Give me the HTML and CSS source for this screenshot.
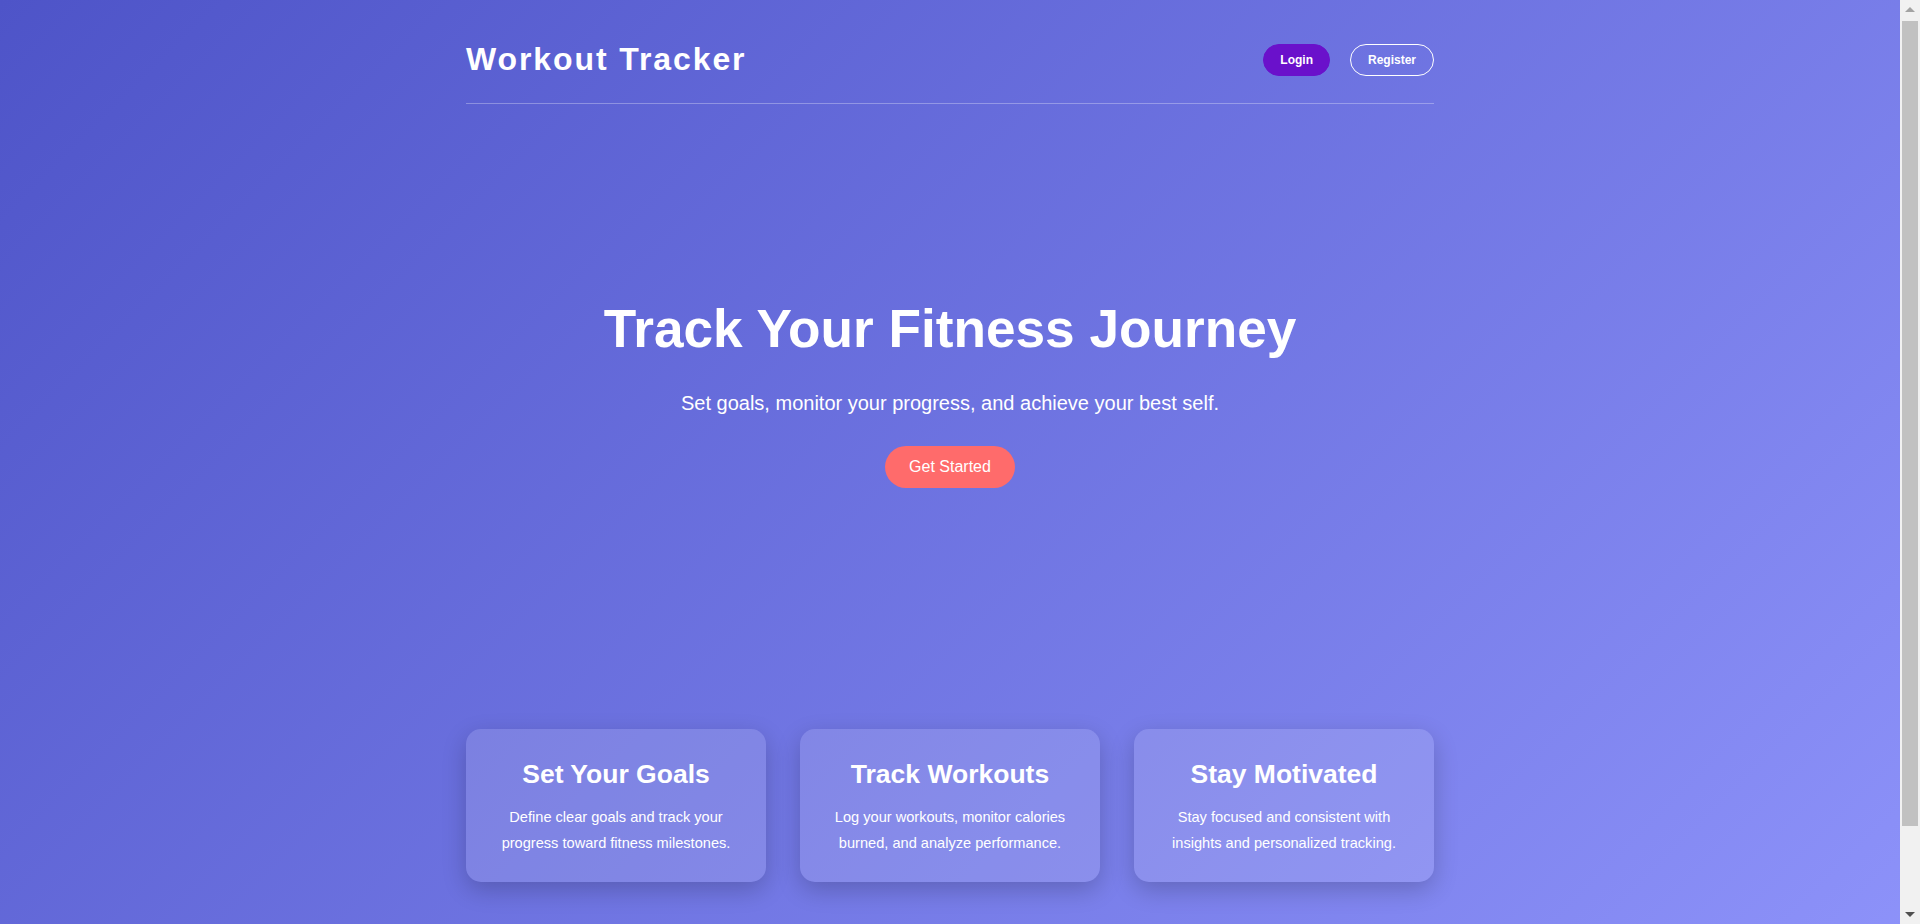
FILE: index.html
```html
<!DOCTYPE html>
<html lang="en">
<head>
<meta charset="UTF-8">
<title>Workout Tracker</title>
<link rel="stylesheet" href="styles.css">
</head>
<body>
<div class="container">
  <header class="header">
    <div class="logo">Workout Tracker</div>
    <nav class="nav">
      <a class="btn btn-login" href="#">Login</a>
      <a class="btn btn-register" href="#">Register</a>
    </nav>
  </header>
  <section class="hero">
    <h1 class="hero-title">Track Your Fitness Journey</h1>
    <p class="hero-sub">Set goals, monitor your progress, and achieve your best self.</p>
    <a class="btn-cta" href="#">Get Started</a>
  </section>
  <section class="features">
    <div class="card">
      <h3 class="card-title">Set Your Goals</h3>
      <p class="card-text">Define clear goals and track your progress toward fitness milestones.</p>
    </div>
    <div class="card">
      <h3 class="card-title">Track Workouts</h3>
      <p class="card-text">Log your workouts, monitor calories burned, and analyze performance.</p>
    </div>
    <div class="card">
      <h3 class="card-title">Stay Motivated</h3>
      <p class="card-text">Stay focused and consistent with insights and personalized tracking.</p>
    </div>
  </section>
</div>
<div class="scrollbar" aria-hidden="true">
  <span class="arrow arrow-up"></span>
  <span class="thumb"></span>
  <span class="arrow arrow-down"></span>
</div>
</body>
</html>
```

FILE: styles.css
```css
* {
  box-sizing: border-box;
}

html, body {
  margin: 0;
  padding: 0;
}

body {
  font-family: "Liberation Sans", Arial, sans-serif;
  color: #ffffff;
  background: linear-gradient(135deg, #4e54c8 0%, #8f94fb 100%);
  min-height: 100vh;
  padding-right: 20px;
}

.container {
  max-width: 1000px;
  margin: 0 auto;
  padding: 0 16px 140px;
}

.header {
  display: flex;
  justify-content: space-between;
  align-items: center;
  padding: 41px 0 25px;
  border-bottom: 1px solid rgba(255, 255, 255, 0.3);
}

.logo {
  font-size: 32px;
  font-weight: 700;
  letter-spacing: 1.9px;
  line-height: 37px;
}

.nav {
  display: flex;
  gap: 20px;
  align-items: center;
}

.btn {
  display: inline-block;
  font-size: 12px;
  font-weight: 700;
  line-height: 14px;
  padding: 8px 16px;
  border-radius: 20px;
  color: #ffffff;
  text-decoration: none;
  border: 1px solid transparent;
}

.btn-login {
  background: #6a11cb;
  border-color: #6a11cb;
}

.btn-register {
  background: transparent;
  border-color: #ffffff;
  padding: 8px 17px;
}

.hero {
  display: flex;
  flex-direction: column;
  align-items: center;
  text-align: center;
  padding: 193px 0 241px;
}

.hero-title {
  margin: 0 0 31px;
  font-size: 53.2px;
  line-height: 1.2;
  font-weight: 700;
}

.hero-sub {
  margin: 0 0 31px;
  font-size: 20px;
  line-height: 23px;
}

.btn-cta {
  display: inline-block;
  background: #ff6b6b;
  color: #ffffff;
  text-decoration: none;
  font-size: 16px;
  line-height: 18px;
  padding: 12px 24px;
  border-radius: 30px;
}

.features {
  display: flex;
  justify-content: space-between;
}

.card {
  width: 300px;
  padding: 30px 28px 26px;
  text-align: center;
  background: rgba(255, 255, 255, 0.13);
  border-radius: 15px;
  box-shadow: 0 8px 24px rgba(0, 0, 0, 0.2);
}

.card-title {
  margin: 0 0 14px;
  font-size: 26.5px;
  line-height: 31px;
  font-weight: 700;
}

.card-text {
  margin: 0;
  font-size: 14.6px;
  line-height: 1.8;
}

.scrollbar {
  position: fixed;
  top: 0;
  right: 0;
  width: 20px;
  height: 100vh;
  background: #f1f1f1;
  display: flex;
  flex-direction: column;
  align-items: center;
}

.arrow {
  width: 0;
  height: 0;
  border-left: 5px solid transparent;
  border-right: 5px solid transparent;
}

.arrow-up {
  margin-top: 7px;
  border-bottom: 5px solid #a3a3a3;
}

.arrow-down {
  margin-top: auto;
  margin-bottom: 7px;
  border-top: 5px solid #505050;
}

.thumb {
  display: block;
  width: 16px;
  height: 805px;
  margin-top: 9px;
  background: #c1c1c1;
}
```
